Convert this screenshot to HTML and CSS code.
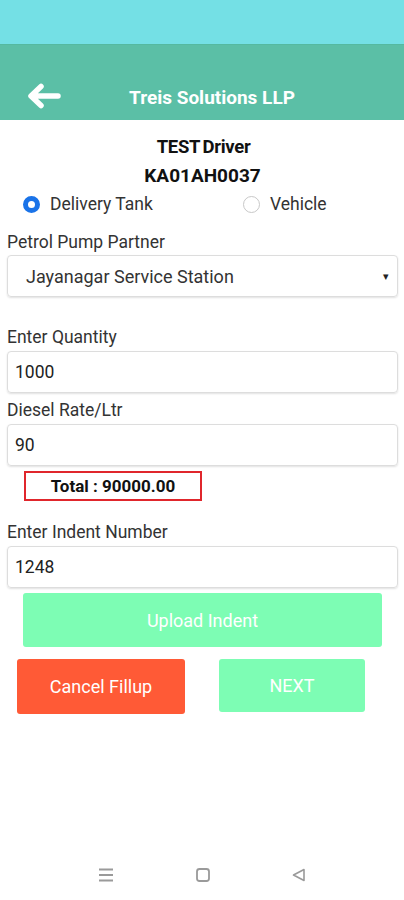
FILE: index.html
```html
<!DOCTYPE html>
<html>
<head>
<meta charset="utf-8">
<link rel="stylesheet" href="styles.css">
</head>
<body>
<div class="screen">
  <div class="statusbar"></div>
  <header class="appbar">
    <svg class="back" width="36" height="26" viewBox="0 0 36 26">
      <path d="M32 13 H6 M15 3.5 L5 13 L15 22.5" fill="none" stroke="#fff" stroke-width="5.5" stroke-linecap="round" stroke-linejoin="round"/>
    </svg>
    <div class="title">Treis Solutions LLP</div>
  </header>
  <main class="content">
    <div class="driver">TEST Driver</div>
    <div class="vehicle">KA01AH0037</div>
    <div class="radios">
      <div class="radio-item"><span class="radio on"></span>Delivery Tank</div>
      <div class="radio-item"><span class="radio"></span>Vehicle</div>
    </div>
    <div class="label first">Petrol Pump Partner</div>
    <div class="select"><span>Jayanagar Service Station</span><span class="caret">▾</span></div>
    <div class="label qty">Enter Quantity</div>
    <div class="field">1000</div>
    <div class="label rate">Diesel Rate/Ltr</div>
    <div class="field">90</div>
    <div class="total">Total : 90000.00</div>
    <div class="label indent">Enter Indent Number</div>
    <div class="field">1248</div>
    <div class="upload">Upload Indent</div>
    <div class="actions">
      <div class="btn cancel">Cancel Fillup</div>
      <div class="btn next">NEXT</div>
    </div>
  </main>
  <nav class="navbar">
    <svg width="18" height="16" viewBox="0 0 18 16"><path d="M2 2.5H16M2 8H16M2 13.5H16" stroke="#9a9a9a" stroke-width="1.8"/></svg>
    <svg width="16" height="16" viewBox="0 0 16 16"><rect x="2" y="2" width="12" height="12" rx="2.5" fill="none" stroke="#9a9a9a" stroke-width="1.8"/></svg>
    <svg width="16" height="16" viewBox="0 0 16 16"><path d="M13 2.5 V13.5 L2.5 8 Z" fill="none" stroke="#9a9a9a" stroke-width="1.6" stroke-linejoin="round"/></svg>
  </nav>
</div>
</body>
</html>
```

FILE: styles.css
```css
* { box-sizing: border-box; }
html, body { margin: 0; padding: 0; background: #fff; }
body { font-family: Roboto, "Liberation Sans", Arial, sans-serif; color: #222; }
.screen { width: 404px; height: 900px; display: flex; flex-direction: column; background: #fff; }
.statusbar { height: 44px; background: #74e0e5; }
.appbar { height: 76px; background: #5bbfa6; display: flex; align-items: flex-end; padding: 0 0 10px 26px; border-top: 1px solid #55b9a0; }
.back { display: block; margin-bottom: 1px; }
.title { color: #fff; font-weight: 700; font-size: 19px; margin-left: 67px; line-height: 24px; }
.content { flex: 1; padding: 15px 6px 0 7px; display: flex; flex-direction: column; }
.driver { text-align: center; font-weight: 700; font-size: 18.5px; line-height: 24px; color: #111; letter-spacing: -0.3px; word-spacing: -1.5px; margin-left: 2px; }
.vehicle { text-align: center; font-weight: 700; font-size: 19px; line-height: 26px; color: #111; margin-top: 4px; }
.radios { display: flex; height: 26px; align-items: center; margin-top: 2px; }
.radio-item { display: flex; align-items: center; font-size: 17.5px; color: #333; }
.radio-item:first-child { margin-left: 16px; width: 220px; }
.radio { width: 17px; height: 17px; border-radius: 50%; border: 1.5px solid #c8c8c8; margin-right: 10px; }
.radio.on { border: 5px solid #1a73e8; }
.label { font-size: 17.5px; color: #333; line-height: 20px; height: 20px; }
.label.first { margin-top: 15px; }
.label.qty { margin-top: 30px; }
.label.rate { margin-top: 7px; }
.label.indent { margin-top: 21px; }
.select, .field { height: 42px; border: 1px solid #ddd; border-radius: 4px; box-shadow: 0 1px 2px rgba(0,0,0,0.12); display: flex; align-items: center; font-size: 17.5px; color: #333; margin-top: 4px; }
.select { padding: 0 8px 0 18px; justify-content: space-between; margin-top: 3px; font-size: 18px; }
.caret { font-size: 11px; color: #222; }
.field { padding: 0 7px; color: #222; }
.total { width: 178px; height: 30px; border: 2px solid #e0262c; margin: 5px 0 0 17px; font-weight: 700; font-size: 17px; display: flex; align-items: center; justify-content: center; color: #111; }
.upload { height: 54px; background: #7dfdb4; border-radius: 3px; color: #fff; font-size: 18px; display: flex; align-items: center; justify-content: center; margin: 5px 16px 0 16px; }
.actions { display: flex; margin-top: 12px; padding-left: 10px; }
.btn { height: 55px; border-radius: 3px; color: #fff; font-size: 18px; display: flex; align-items: center; justify-content: center; }
.cancel { width: 168px; background: #ff5a36; }
.next { width: 146px; height: 53px; background: #7dfdb4; margin-left: 34px; }
.navbar { height: 50px; display: flex; align-items: center; justify-content: center; gap: 80px; }
.navbar svg { display: block; }
```
